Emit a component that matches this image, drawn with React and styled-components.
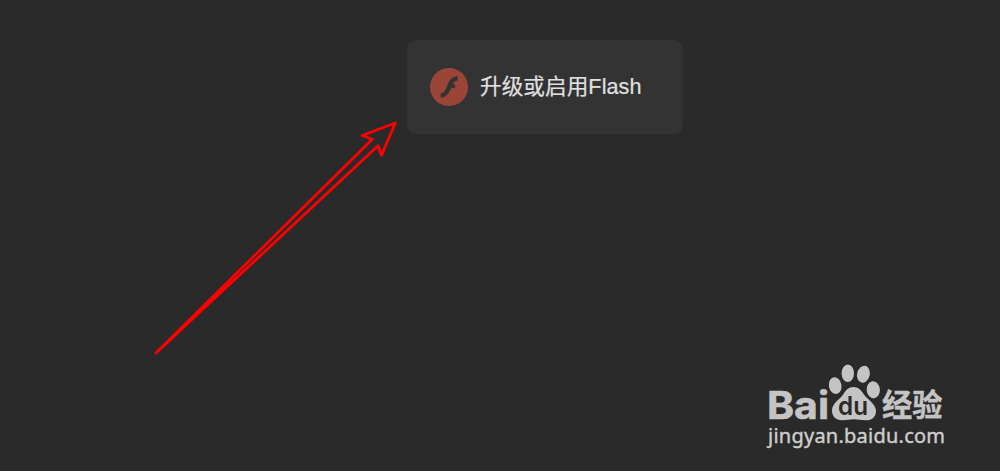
import styled, { createGlobalStyle } from "styled-components";

const GlobalStyle = createGlobalStyle`
  * {
    box-sizing: border-box;
  }

  body {
    margin: 0;
    background-color: #2a2a2a;
    overflow: hidden;
  }
`;

const Page = styled.main`
  position: relative;
  width: 1000px;
  height: 471px;
  padding: 40px 0 0 407px;
  background-color: #2a2a2a;
`;

const FlashCard = styled.section`
  width: 276px;
  height: 94px;
  padding: 0 23px;
  display: flex;
  align-items: center;
  gap: 12px;
  border-radius: 9px;
  background-color: #333333;
`;

const FlashIcon = styled.svg`
  width: 38px;
  height: 38px;
  flex-shrink: 0;
`;

const FlashLabel = styled.span`
  color: #e0e0e0;
  font-family: "Liberation Sans", "Noto Sans CJK SC", sans-serif;
  font-size: 21.6px;
  line-height: 32px;
  letter-spacing: 0.08px;
  white-space: nowrap;
  -webkit-text-stroke: 0.2px currentColor;
`;

const Arrow = styled.svg`
  position: absolute;
  top: 110px;
  left: 140px;
  width: 270px;
  height: 260px;
`;

const Watermark = styled.aside`
  position: absolute;
  top: 360px;
  left: 764px;
  display: flex;
  flex-direction: column;
  color: #c4c4c4;
`;

const Logo = styled.svg`
  width: 184px;
  height: 63px;
  overflow: visible;
`;

const SiteAddress = styled.span`
  padding-left: 4px;
  color: #cecece;
  font-family: "Noto Sans", "Open Sans", sans-serif;
  font-size: 20px;
  line-height: 26px;
  letter-spacing: 0.24px;
  -webkit-text-stroke: 0.4px currentColor;
`;

const Flash = () => (
  <FlashIcon viewBox="0 0 38 38">
    <circle cx="19" cy="19" r="19" fill="#9b4539" />
    <path
      d="M27.2 8.8V12.2C24.6 12.6 23.2 14.2 22.2 16.6H24.6V19.6H21C18.6 25.2 16.4 28.8 11 29.2V25.8C14.4 25.2 15.8 22 17.4 18C19.4 12.8 21.4 9.2 27.2 8.8Z"
      fill="#333333"
      stroke="#333333"
      strokeWidth="0.8"
      strokeLinejoin="round"
    />
  </FlashIcon>
);

const BaiduLogo = () => (
  <Logo viewBox="764 360 184 63" fill="currentColor">
    <text
      x="767"
      y="418.5"
      textLength="62"
      lengthAdjust="spacingAndGlyphs"
      fontFamily="Inter, Liberation Sans, sans-serif"
      fontSize="38.5"
      fontWeight="700"
      stroke="currentColor"
      strokeWidth="0.6"
    >
      Bai
    </text>
    <ellipse cx="835.2" cy="385.6" rx="6.3" ry="8.4" transform="rotate(-10 835.2 385.6)" />
    <ellipse cx="847.8" cy="373.3" rx="6.2" ry="8.8" />
    <ellipse cx="863.4" cy="374.2" rx="6.3" ry="8.6" transform="rotate(14 863.4 374.2)" />
    <ellipse cx="873.3" cy="389.8" rx="6.6" ry="8.6" transform="rotate(-6 873.3 389.8)" />
    <path d="M853.5 387C858.5 387 861 390 863.5 394C866.5 399 876 403.5 876 411C876 417 872 420.3 866 420.3C861 420.3 858 419.3 854 419.3C850 419.3 847 420.3 842 420.3C836 420.3 832 416.5 832 410.5C832 403 840.5 399 843.5 394C846 390 848.5 387 853.5 387Z" />
    <text
      x="838"
      y="415.3"
      textLength="30"
      lengthAdjust="spacingAndGlyphs"
      fontFamily="Inter, Liberation Sans, sans-serif"
      fontSize="25"
      fontWeight="600"
      fill="#2a2a2a"
    >
      du
    </text>
    <text
      x="882"
      y="416.4"
      textLength="60.5"
      lengthAdjust="spacingAndGlyphs"
      fontFamily="Noto Sans CJK SC, sans-serif"
      fontSize="31"
      fontWeight="700"
      stroke="currentColor"
      strokeWidth="0.4"
    >
      经验
    </text>
  </Logo>
);

const App = () => {
  return (
    <>
      <GlobalStyle />
      <Page>
        <FlashCard>
          <Flash />
          <FlashLabel>升级或启用Flash</FlashLabel>
        </FlashCard>
        <Arrow viewBox="140 110 270 260">
          <path
            d="M156 353L372.3 139.2L362.3 135.5L395.3 123L381.5 155.3L378 145.8Z"
            fill="none"
            stroke="#ff0000"
            strokeWidth="2.8"
            strokeLinejoin="round"
          />
        </Arrow>
        <Watermark>
          <BaiduLogo />
          <SiteAddress>jingyan.baidu.com</SiteAddress>
        </Watermark>
      </Page>
    </>
  );
};

export default App;
